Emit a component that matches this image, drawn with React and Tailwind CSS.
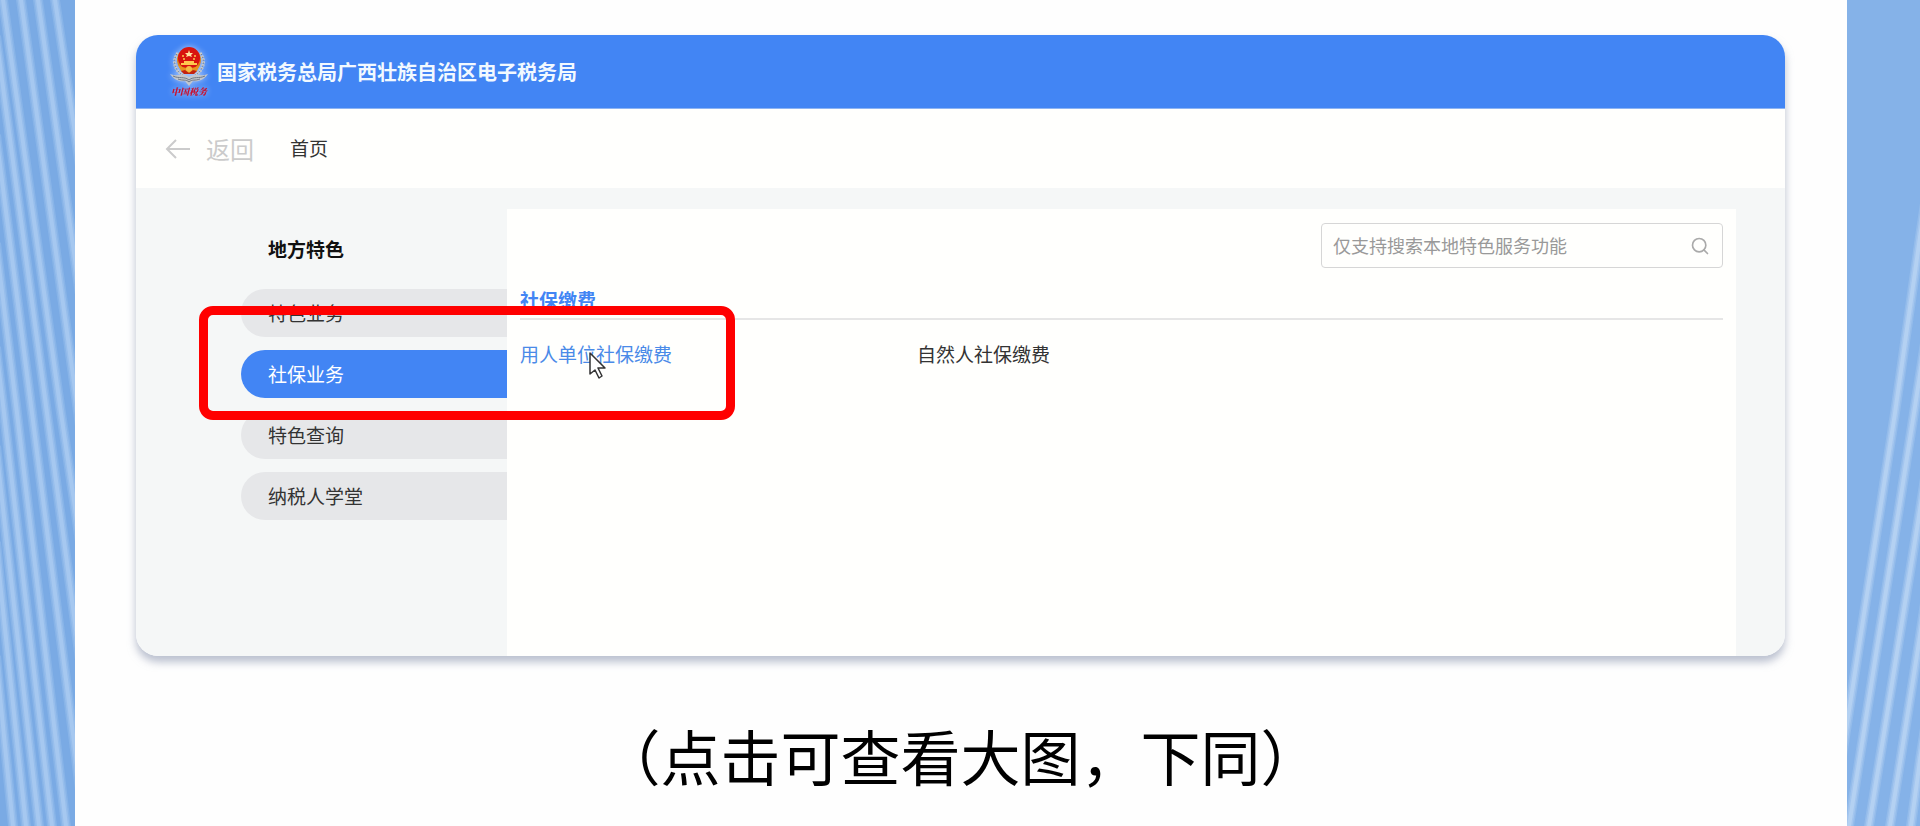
import React from 'react';
import { Search } from 'lucide-react';

const menuItems = [
  { label: '特色业务', active: false },
  { label: '社保业务', active: true },
  { label: '特色查询', active: false },
  { label: '纳税人学堂', active: false },
];

const services = [
  { label: '用人单位社保缴费', hovered: true },
  { label: '自然人社保缴费', hovered: false },
];

const leftStripes = [
  'M51 -30 L55 0 L75 133 L80 166',
  'M34 -30 L38 0 L75 260 L80 295',
  'M17 -30 L21 0 L75 390 L80 426',
  'M-1 -30 L3 0 L61 413 L75 508 L80 542',
  'M-4 36 L0 65 L47 413 L75 623 L80 660',
  'M-4 135 L0 165 L32 413 L75 750 L80 790',
  'M-4 243 L0 275 L17 413 L66 826 L70 860',
  'M-4 347 L0 380 L4 413 L52 826 L56 860',
  'M-4 446 L0 482 L39 826 L43 860',
  'M-4 542 L0 582 L26 826 L30 860',
  'M-4 656 L0 696 L13 826 L17 860',
];

const rightStripes = [
  'M80 190 L73 237 L48 413 L0 724 L-5 756',
  'M80 330 L67 413 L2 826 L-3 858',
  'M80 465 L73 510 L22 826 L17 857',
  'M80 590 L73 636 L43 826 L38 858',
  'M80 715 L73 760 L64 826 L59 862',
];

const Stripes = ({ paths, width, stroke, strokeWidth }) => (
  <svg
    viewBox={`0 0 ${width} 826`}
    preserveAspectRatio="none"
    className="h-full w-full"
    aria-hidden="true"
  >
    <g fill="none" stroke={stroke}>
      {paths.map((d) => (
        <g key={d}>
          <path d={d} strokeWidth={strokeWidth + 5} opacity="0.25" />
          <path d={d} strokeWidth={strokeWidth + 2} opacity="0.35" />
          <path d={d} strokeWidth={strokeWidth - 1} opacity="0.5" />
        </g>
      ))}
    </g>
  </svg>
);

const Emblem = () => (
  <div className="flex w-10 flex-col items-center drop-shadow-[0_0_3px_rgba(255,255,255,0.6)]">
    <svg viewBox="0 0 40 40" className="h-10 w-10" aria-hidden="true">
      {/* wheat ears */}
      <g fill="none" stroke="#c9ccd0" strokeWidth="3" strokeDasharray="2 1">
        <path d="M9 7 C3 15 5 24 15 30" />
        <path d="M31 7 C37 15 35 24 25 30" />
      </g>
      <g fill="none" stroke="#77736a" strokeWidth="1" strokeDasharray="1 2">
        <path d="M8 8 C3 16 6 25 15 30" />
        <path d="M32 8 C37 16 34 25 25 30" />
      </g>
      {/* wings */}
      <path d="M1 28 C8 31 14 27 20 31 C26 27 32 31 39 28 C35 34 29 36 24 35 L20 40 L16 35 C11 36 5 34 1 28 Z" fill="#c3c7cc" />
      <path d="M4 30 C10 33 15 30 20 34 C25 30 30 33 36 30 M9 33 C14 35 17 33 20 36 C23 33 26 35 31 33" fill="none" stroke="#6f7886" strokeWidth="1" />
      {/* national emblem */}
      <circle cx="20" cy="14" r="12" fill="#d9831c" />
      <circle cx="20" cy="12" r="11" fill="#d8140f" />
      <path d="M20 4 L21 7 L24 7 L22 9 L23 11 L20 10 L17 11 L18 9 L16 7 L19 7 Z" fill="#ffe3a0" />
      <g fill="#ffc94f">
        <circle cx="14" cy="10" r="1" />
        <circle cx="26" cy="10" r="1" />
        <circle cx="15" cy="13" r="1" />
        <circle cx="25" cy="13" r="1" />
        <path d="M12 17 H28 V19 H12 Z M15 15 H25 V17 H15 Z" />
      </g>
      <path d="M9 19 C14 23 26 23 31 19 L28 25 C24 28 16 28 12 25 Z" fill="#e8951f" />
      <circle cx="20" cy="23" r="3" fill="#f6bb45" />
      <path d="M12 25 L16 24 L20 27 L24 24 L28 25 L25 28 H15 Z" fill="#c4230f" />
    </svg>
    <span className="font-['Noto_Serif_CJK_SC','Noto_Sans_CJK_SC',serif] text-[9px] leading-3 font-black whitespace-nowrap text-[#c8102e] italic">
      中国税务
    </span>
  </div>
);

const Header = () => (
  <header className="flex h-[74px] items-center gap-2 border-b border-[#8db4f3] bg-[#4285f4] pl-[33px]">
    <Emblem />
    <h1 className="text-[20px] leading-7 font-bold text-[#f2f9ff]">
      国家税务总局广西壮族自治区电子税务局
    </h1>
  </header>
);

const BackArrow = () => (
  <svg viewBox="0 0 26 20" className="h-5 w-[26px]" fill="none" stroke="currentColor" strokeWidth="2" aria-hidden="true">
    <path d="M11 1 L2 10 L11 19 M2 10 H25" />
  </svg>
);

const Breadcrumb = () => (
  <nav className="flex h-[79px] items-center bg-[#fffffd] pl-[29px]">
    <a href="#back" className="flex items-center gap-[15px] text-2xl text-[#cbcbcb]">
      <BackArrow />
      返回
    </a>
    <a href="#home" className="ml-9 text-[19px] text-[#333333]">
      首页
    </a>
  </nav>
);

const Sidebar = () => (
  <aside className="w-[371px] shrink-0 pt-[47px] pl-[105px]">
    <h2 className="pl-[27px] text-[19px] leading-7 font-bold text-[#111111]">地方特色</h2>
    <ul className="mt-[26px] flex flex-col gap-[13px]">
      {menuItems.map((item) => (
        <li key={item.label}>
          <button
            type="button"
            className={
              item.active
                ? 'h-12 w-full rounded-l-full bg-[#4285f4] pl-[27px] text-left text-[19px] text-white'
                : 'h-12 w-full rounded-l-full bg-[#e6e7e9] pl-[27px] text-left text-[19px] text-[#333333]'
            }
          >
            {item.label}
          </button>
        </li>
      ))}
    </ul>
  </aside>
);

const Pointer = () => (
  <svg viewBox="0 0 17 27" className="absolute top-3 left-[69px] h-[27px] w-[17px]" aria-hidden="true">
    <path
      d="M1 1 V22 L6 18 L10 26 L13 24 L9 16 H16 Z"
      fill="#ffffff"
      stroke="#333333"
      strokeWidth="1.5"
      strokeLinejoin="round"
    />
  </svg>
);

const Content = () => (
  <section className="mt-[21px] mr-[49px] min-w-0 flex-1 bg-[#fffffd] px-[13px] pt-[14px]">
    <div className="ml-auto flex h-[45px] w-[402px] items-center rounded-sm border border-[#d6d6d6] pr-3 pl-[11px]">
      <input
        type="search"
        aria-label="搜索"
        placeholder="仅支持搜索本地特色服务功能"
        className="min-w-0 flex-1 bg-transparent text-[18px] outline-none placeholder:text-[#999999]"
      />
      <button type="button" aria-label="搜索">
        <Search className="h-5 w-5 text-[#aaaaaa]" strokeWidth={2} />
      </button>
    </div>
    <h3 className="mt-[18px] border-b-2 border-[#e6e6e6] pb-1 text-[19px] leading-7 font-bold text-[#4285f4]">
      社保缴费
    </h3>
    <ul className="mt-5 flex text-[19px] leading-7">
      {services.map((service) => (
        <li key={service.label} className="relative w-[33%]">
          <a href="#service" className={service.hovered ? 'text-[#4a8ae8]' : 'text-[#333333]'}>
            {service.label}
          </a>
          {service.hovered && <Pointer />}
        </li>
      ))}
    </ul>
  </section>
);

const App = () => (
  <div className="flex min-h-screen bg-[#fefefe] font-['Noto_Sans_CJK_SC',sans-serif]">
    <div className="relative w-[75px] shrink-0 bg-[#7aaae4]">
      <div className="absolute inset-0">
        <Stripes paths={leftStripes} width={75} stroke="#b5d2f3" strokeWidth={5} />
      </div>
    </div>

    <main className="min-w-0 flex-1 pt-[35px] pr-[62px] pl-[61px]">
      <div className="relative rounded-[22px] shadow-[0_6px_8px_rgba(140,150,175,0.6)]">
        <div className="overflow-hidden rounded-[22px] bg-[#f5f7f7]">
          <Header />
          <Breadcrumb />
          <div className="flex min-h-[468px]">
            <Sidebar />
            <Content />
          </div>
        </div>
        {/* highlight around the chosen menu entry and its link */}
        <div className="pointer-events-none absolute top-[271px] left-[63px] h-[114px] w-[536px] rounded-[14px] border-[9px] border-[#ff0000]" />
      </div>
      <p className="mt-[54px] text-center text-[60px] leading-[90px] text-black">
        （点击可查看大图，下同）
      </p>
    </main>

    <div className="relative w-[73px] shrink-0 bg-[#85b2e8]">
      <div className="absolute inset-0">
        <Stripes paths={rightStripes} width={73} stroke="#c3dbf5" strokeWidth={5} />
      </div>
    </div>
  </div>
);

export default App;
